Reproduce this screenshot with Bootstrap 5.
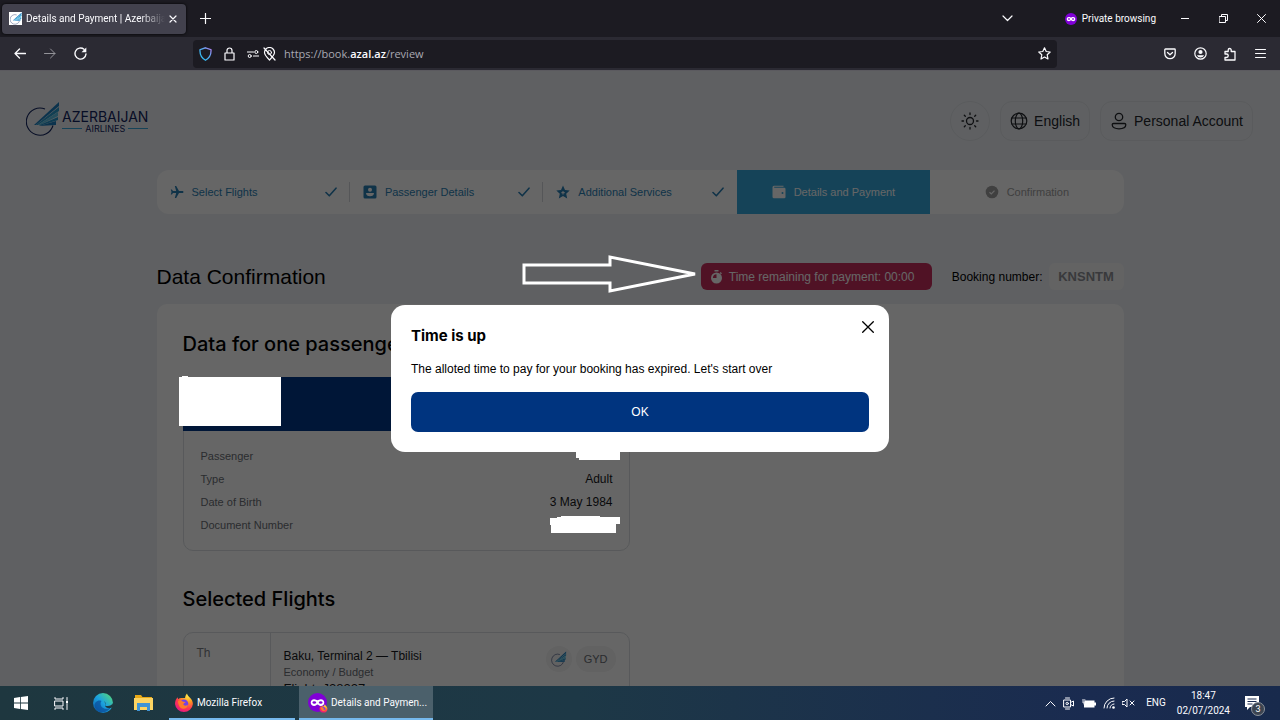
<!DOCTYPE html>
<html lang="en">
<head>
<meta charset="utf-8">
<meta name="viewport" content="width=device-width, initial-scale=1">
<title>Details and Payment | Azerbaijan Airlines</title>
<link href="https://cdn.jsdelivr.net/npm/bootstrap@5.3.0/dist/css/bootstrap.min.css" rel="stylesheet">
<style>
  body { font-family: "Liberation Sans", Arial, sans-serif; font-size: 12px; line-height: 16px; color: #000; background: #1c1b22; }
  svg { display: block; flex: none; }
  button { font: inherit; color: inherit; background: none; border: 0; padding: 0; }
  .sys { font-family: Roboto, "Open Sans", sans-serif; color: #fbfbfe; font-size: 10px; }
  .stroke { fill: none; stroke: currentColor; stroke-linecap: round; stroke-linejoin: round; }

  /* browser chrome */
  .tabstrip { height: 37px; background: #1c1b22; padding-left: 2px; }
  .tab { width: 184px; height: 30px; background: #42414d; border-radius: 4px; padding: 0 9px 0 7px; gap: 4px; box-shadow: 0 0 3px #000; }
  .tab-title { overflow: hidden; white-space: nowrap; -webkit-mask-image: linear-gradient(90deg, #000 82%, transparent); mask-image: linear-gradient(90deg, #000 82%, transparent); }
  .tool { width: 30px; height: 30px; display: flex; align-items: center; justify-content: center; }
  .win { width: 38px; height: 36px; display: flex; align-items: center; justify-content: center; }
  .private { gap: 5px; padding: 0 10px 0 42px; }
  .toolbar { height: 34px; background: #2b2a33; border-bottom: 1px solid #5b5a5f; padding: 0 5px; }
  .urlbar { height: 28px; background: #1c1b22; border-radius: 4px; margin: 0 98px; padding: 0 6px; }
  .url { font-family: "Open Sans", "Noto Sans", sans-serif; font-size: 11px; color: #a9a9b2; text-decoration: none; }
  .url b { color: #fbfbfe; font-weight: 600; }

  /* airline page */
  .site { background: #eef1f5; }
  .dim { position: absolute; inset: 0; background: rgba(0,0,0,.6); z-index: 10; }
  .topbar { padding: 30px 27px 0 26px; }
  .brand { color: #12245f; text-decoration: none; gap: 2px; padding-bottom: 4px; }
  .brand-name { font-family: Inter, sans-serif; font-size: 14px; line-height: 14px; padding-top: 5px; }
  .brand-sub { font-family: Inter, sans-serif; font-size: 9px; line-height: 10px; gap: 3px; }
  .brand-sub::before, .brand-sub::after { content: ""; flex: 1; height: 1px; background: #38a9dc; }
  .pills { gap: 10px; }
  .pill { height: 40px; border: 1px solid #e0e3e8; border-radius: 12px; padding: 0 9px; gap: 6px; font-size: 14px; color: #23262c; }
  .pill-round { width: 40px; border-radius: 50%; }
  .wrap { max-width: 967px; }
  .steps { height: 44px; margin-top: 29px; background: #fff; border-radius: 12px; font-size: 11px; color: #2a7fb5; }
  .step { flex: 1 1 0; padding: 0 13px; gap: 8px; color: inherit; text-decoration: none; }
  .step-line { height: 20px; border-left: 1px solid #d5d8dc; margin-left: -1px; }
  .step-now { background: #36a9dd; color: #fff; }
  .step-next { color: #a0a0a0; }
  .title-row { margin-top: 49px; height: 27px; }
  .big { font-size: 21px; line-height: 26px; font-weight: 400; margin: 0; white-space: nowrap; }
  .big-medium { font-family: Inter, sans-serif; font-size: 20px; font-weight: 500; }
  .timer { height: 27px; width: 231px; background: #c82d5c; color: #fff; border-radius: 6px; padding: 0 9px; gap: 6px; margin-right: 20px; }
  .code { height: 27px; width: 75px; background: #f8f8f8; border-radius: 6px; color: #8e9096; font-weight: 700; font-size: 13px; margin-left: 6px; }
  .panel { background: #fff; border-radius: 10px; margin-top: 14px; padding: 27px 26px 200px; }
  .box { max-width: 447px; border: 1px solid #dcdfe3; border-radius: 10px; margin-top: 20px; }
  .pax-head { height: 54px; background: #00388a; margin: -1px; border-radius: 10px 10px 0 0; }
  .pax { width: 100%; margin: 14px 0; }
  .pax th { font-weight: 400; font-size: 11px; color: #6b6f76; padding: 0 0 0 17px; height: 23px; }
  .pax td { padding: 0 16px 0 0; text-align: right; color: #16181c; position: relative; }
  .chosen { margin-top: 35px; }
  .cover { position: absolute; z-index: 20; fill: #fff; }
  .cover-name { left: -4px; top: -1px; }
  .cover-passenger { right: 9px; top: 2px; }
  .cover-document { right: 9px; top: 3px; }
  .pointer { position: absolute; z-index: 20; left: -180px; top: -9px; fill: none; stroke: #fff; stroke-width: 3; }
  .day { width: 87px; border-right: 1px solid #dcdfe3; padding: 12px 13px; color: #7a7d83; height: 130px; }
  .leg { padding: 15px 13px 0; color: #16181c; }
  .muted { font-size: 11px; line-height: 17px; color: #6b6f76; }
  .flight-no { font-size: 13px; line-height: 16px; }
  .chips { gap: 4px; padding: 13px 13px 0 0; }
  .chip { height: 26px; border-radius: 13px; background: #f4f4f4; color: #6b6f76; font-size: 11px; padding: 0 8px; }
  .layer { position: absolute; inset: 0; z-index: 30; }
  .dialog { width: 498px; background: #fff; border-radius: 14px; padding: 20px; }
  .dialog h2 { font-family: Inter, sans-serif; font-size: 15px; line-height: 22px; font-weight: 700; margin: 0; }
  .dialog p { margin: 14px 0; line-height: 17px; }
  .dialog-x { margin: -4px -5px 0 0; }
  .ok { height: 40px; background: #00347f; color: #fff; border-radius: 7px; }

  /* taskbar */
  .taskbar { height: 34px; background: linear-gradient(90deg, #1e373f, #1d3846 45%, #1a2b50 85%, #182a4c); }
  .task { height: 34px; gap: 3px; padding: 2px 0 0 5px; border-bottom: 2px solid #76b9ed; }
  .task-first { margin-left: 5px; }
  .task-now { background: #4b606b; padding-left: 9px; }
  .launch { width: 41px; height: 34px; display: flex; align-items: center; justify-content: center; }
  .clock { line-height: 15px; }
  .tray { gap: 7px; padding-right: 21px; }
  .count { position: absolute; left: 6px; top: 6px; width: 14px; height: 14px; border-radius: 50%; background: #3c4450; border: 1px solid #8b929b; font-size: 9px; line-height: 12px; text-align: center; }
</style>
</head>
<body>
<svg width="0" height="0" class="position-absolute" aria-hidden="true">
  <defs>
    <symbol id="wing" viewBox="0 0 34 36">
      <path d="M27 24.500A13.600 13.600 0 1 1 19 8" fill="none" stroke="#12245f" stroke-width="1.100"/>
      <path d="M8 24 33 1v4L10 24z" fill="#1d7fc0"/><path d="M10 24 33 6v4L12 24z" fill="#2b9dd0"/><path d="M12 24 32 11v4L14 24z" fill="#5cc0e4"/><path d="M13 24.300 32 16v3L15 24.500z" fill="#2596cc"/><path d="M13 25 30 20v4z" fill="#1d7fc0"/>
    </symbol>
    <symbol id="check" viewBox="0 0 12 10"><path class="stroke" d="M1 5.500 4.300 8.800 11 1.200" stroke-width="1.600"/></symbol>
    <symbol id="mask" viewBox="0 0 16 16"><circle cx="8" cy="8" r="8" fill="#8000d7"/><path d="M5.200 5.200c1.300 0 2 .8 2.800.8s1.500-.8 2.800-.8c1.800 0 2.900 1.200 2.900 2.700 0 1.800-1.200 3-2.900 3-1.500 0-2-1.200-2.800-1.200s-1.300 1.200-2.800 1.200c-1.700 0-2.900-1.200-2.900-3 0-1.500 1.100-2.700 2.900-2.700z" fill="#fff"/><ellipse cx="5.300" cy="8" rx="1.500" ry="1" fill="#8000d7"/><ellipse cx="10.700" cy="8" rx="1.500" ry="1" fill="#8000d7"/></symbol>
    <radialGradient id="fox" cx=".75" cy=".1" r="1"><stop offset="0" stop-color="#fff44f"/><stop offset=".35" stop-color="#ff9a1f"/><stop offset=".7" stop-color="#ff3750"/><stop offset="1" stop-color="#e31587"/></radialGradient>
    <linearGradient id="edge" x1="0" y1="1" x2="1" y2="0"><stop offset="0" stop-color="#0c59a4"/><stop offset=".5" stop-color="#1ba2e0"/><stop offset="1" stop-color="#5de06a"/></linearGradient>
    <linearGradient id="shield" x1="0" y1="1" x2="1" y2="0"><stop offset="0" stop-color="#21c5f5"/><stop offset=".6" stop-color="#5aa8f0"/><stop offset="1" stop-color="#b67cf0"/></linearGradient>
    <symbol id="firefox" viewBox="0 0 20 20"><path d="M13 .5c.4 1.800 1.600 2.800 3 4.300 1.700 1.800 2.900 3.600 2.900 6.200A9 9 0 0 1 1 11c0-2.600.8-5 2.600-6.800l.5 2c1-.9 2.200-1.300 3.400-1.200C8.500 4.800 10 5 11 5c.3-1.800.8-3.300 2-4.500z" fill="url(#fox)"/><circle cx="10" cy="10.800" r="4.300" fill="#7542e5"/><path d="M4 8c2-1 4-.5 5 .8 1.400-.2 2.300 0 2.600.6-1 .2-2 .8-2.300 1.900 1 2 3.400 1.600 4.700.2-.3 3-2.700 4.500-5 4.200C6 15.300 4 12 4 8z" fill="#ff7a2a"/></symbol>
  </defs>
</svg>

<div class="vh-100 d-flex flex-column overflow-hidden">

  <header class="sys">
    <div class="tabstrip d-flex align-items-center">
      <div class="tab d-flex align-items-center">
        <svg width="13" height="13" viewBox="0 0 13 13"><rect width="13" height="13" fill="#fff"/><svg x="1" y="0" width="12" height="13"><use href="#wing"/></svg></svg>
        <span class="tab-title flex-fill">Details and Payment | Azerbaijan Airlines</span>
        <button aria-label="Close tab"><svg width="8" height="8" viewBox="0 0 8 8"><path class="stroke" stroke-width="1.200" d="M1 1l6 6M7 1 1 7"/></svg></button>
      </div>
      <button class="tool ms-1" aria-label="New tab"><svg width="11" height="11" viewBox="0 0 11 11"><path class="stroke" stroke-width="1.200" d="M5.500.5v10M.5 5.500h10"/></svg></button>
      <button class="tool ms-auto" aria-label="List all tabs"><svg width="11" height="7" viewBox="0 0 11 7"><path class="stroke" stroke-width="1.200" d="M1 1l4.500 4.500L10 1"/></svg></button>
      <span class="private d-flex align-items-center"><svg width="12" height="12"><use href="#mask"/></svg><span class="text-nowrap">Private browsing</span></span>
      <button class="win" aria-label="Minimize"><svg width="8" height="8" viewBox="0 0 8 8"><path class="stroke" d="M0 3.500h8"/></svg></button>
      <button class="win" aria-label="Restore"><svg width="9" height="9" viewBox="0 0 9 9"><path class="stroke" d="M.5 2.500h6v6h-6zM2.500 2.500v-2h6v6h-2"/></svg></button>
      <button class="win" aria-label="Close"><svg width="9" height="9" viewBox="0 0 9 9"><path class="stroke" d="M.5.5l8 8M8.500.5l-8 8"/></svg></button>
    </div>
    <div class="toolbar d-flex align-items-center">
      <button class="tool" aria-label="Back"><svg width="12" height="11" viewBox="0 0 12 11"><path class="stroke" stroke-width="1.300" d="M11.500 5.500H1M5.500 1 1 5.500 5.500 10"/></svg></button>
      <button class="tool opacity-50" aria-label="Forward"><svg width="12" height="11" viewBox="0 0 12 11"><path class="stroke" d="M.5 5.500H11M6.500 1 11 5.500 6.500 10"/></svg></button>
      <button class="tool" aria-label="Reload"><svg width="13" height="13" viewBox="0 0 13 13"><path class="stroke" stroke-width="1.400" d="M12 7A5.500 5.500 0 1 1 10 2.300"/><path d="M12.300.5v4.800H7.500z" fill="currentColor"/></svg></button>
      <div class="urlbar flex-fill d-flex align-items-center gap-2">
        <svg width="13" height="14" viewBox="0 0 13 14"><path d="M6.500.8 12 2.700c.3 4.600-1 8-5.500 10.500C2 10.700.7 7.300 1 2.700z" fill="none" stroke="url(#shield)" stroke-width="1.300"/></svg>
        <svg class="mx-1" width="11" height="14" viewBox="0 0 11 14"><path class="stroke" stroke-width="1.200" d="M1 6h9v7H1zM3 6V3.500a2.500 2.500 0 0 1 5 0V6"/></svg>
        <span class="d-flex align-items-center gap-1">
        <svg width="12" height="8" viewBox="0 0 12 8"><path class="stroke" stroke-width="1.200" d="M.5 2h6M6.500 6h5"/><circle class="stroke" cx="9.300" cy="2" r="1.500"/><circle class="stroke" cx="2.700" cy="6" r="1.500"/></svg>
        <svg width="13" height="14" viewBox="0 0 13 14"><path class="stroke" stroke-width="1.200" d="M6.500 13C3 9.500 1.500 8 1.500 5.500a5 5 0 0 1 10 0C11.500 8 10 9.500 6.500 13zM1 1l11 12"/><circle class="stroke" cx="6.500" cy="5.500" r="2"/></svg></span>
        <a class="url flex-fill" href="#">https://book.<b>azal.az</b>/review</a>
        <button aria-label="Bookmark"><svg width="13" height="13" viewBox="0 0 13 13"><path class="stroke" stroke-width="1.200" d="M6.500.8 8.200 4.500l4 .5-3 2.800.8 4.200-3.500-2L3 12l.8-4.200L.8 5l4-.5z"/></svg></button>
      </div>
      <button class="tool" aria-label="Save to Pocket"><svg width="12" height="12" viewBox="0 0 12 12"><path class="stroke" stroke-width="1.300" d="M1.500 1h9q.7 0 .7.700V5.500a5.200 5.200 0 0 1-10.400 0V1.700Q.8 1 1.500 1zM3.500 4.500 6 6.800l2.500-2.300"/></svg></button>
      <button class="tool" aria-label="Account"><svg width="13" height="13" viewBox="0 0 13 13"><circle class="stroke" cx="6.500" cy="6.500" r="5.700" stroke-width="1.200"/><circle cx="6.500" cy="5" r="2.100" fill="currentColor"/><path d="M2.900 8.300h7.200Q9 10.500 6.500 10.500T2.900 8.300z" fill="currentColor"/></svg></button>
      <button class="tool" aria-label="Extensions"><svg width="12" height="14" viewBox="0 0 12 14"><path class="stroke" stroke-width="1.300" d="M1 7V4.500h3.200V3a1.500 1.500 0 0 1 3 0v1.500H11V13H1v-2.500h1.500a1.700 1.700 0 0 0 0-3.500z"/></svg></button>
      <button class="tool" aria-label="Menu"><svg width="11" height="9" viewBox="0 0 11 9"><path class="stroke" d="M.5 .5h10M.5 4.500h10M.5 8.500h10"/></svg></button>
    </div>
  </header>

  <main class="site flex-fill position-relative overflow-hidden">
    <div class="topbar d-flex align-items-center">
      <a class="brand d-flex align-items-center me-auto" href="#">
        <svg width="34" height="36"><use href="#wing"/></svg>
        <span class="d-flex flex-column"><span class="brand-name">AZERBAIJAN</span><span class="brand-sub d-flex align-items-center">AIRLINES</span></span>
      </a>
      <div class="pills d-flex">
        <button class="pill pill-round d-flex align-items-center justify-content-center p-0" aria-label="Theme"><svg width="18" height="18" viewBox="0 0 18 18"><circle class="stroke" cx="9" cy="9" r="3.500" stroke-width="1.300"/><path class="stroke" stroke-width="1.300" d="M9 1v1.500M9 15.500V17M1 9h1.500M15.500 9H17M3.300 3.300l1 1M13.700 13.700l1 1M14.700 3.300l-1 1M4.300 13.700l-1 1"/></svg></button>
        <button class="pill d-flex align-items-center"><svg width="18" height="18" viewBox="0 0 18 18"><g class="stroke" stroke-width="1.200"><circle cx="9" cy="9" r="7.800"/><ellipse cx="9" cy="9" rx="3.700" ry="7.800"/><path d="M2 6h14M2 12h14"/></g></svg>English</button>
        <button class="pill d-flex align-items-center"><svg width="18" height="18" viewBox="0 0 18 18"><g class="stroke" stroke-width="1.300"><circle cx="9" cy="5" r="3.700"/><path d="M3.500 11.500h11q1.300 0 1.300 1.300c0 2.600-3 4-6.800 4s-6.800-1.400-6.800-4q0-1.300 1.300-1.300z"/></g></svg>Personal Account</button>
      </div>
    </div>

    <div class="wrap mx-auto">
      <nav class="steps d-flex align-items-center overflow-hidden" aria-label="Booking steps">
        <a class="step d-flex align-items-center" href="#"><svg width="14" height="14" viewBox="0 0 14 14"><path fill="currentColor" d="M13.500 7c0 .6-.6 1-1.300 1H9L6.200 13H4.800L6.200 8H3L1.900 9.500H.8L1.500 7 .8 4.500h1.100L3 6h3.200L4.800 1h1.400L9 6h3.200c.7 0 1.300.4 1.300 1z"/></svg><span class="me-auto">Select Flights</span><svg width="12" height="10"><use href="#check"/></svg></a>
        <span class="step-line"></span>
        <a class="step d-flex align-items-center" href="#"><svg width="14" height="14" viewBox="0 0 14 14"><rect x=".5" y=".5" width="13" height="13" rx="1.500" fill="currentColor"/><circle cx="7" cy="4.800" r="2" fill="#fff"/><path d="M3 8h8q-.3 3.200-4 3.200T3 8z" fill="#fff"/></svg><span class="me-auto">Passenger Details</span><svg width="12" height="10"><use href="#check"/></svg></a>
        <span class="step-line"></span>
        <a class="step d-flex align-items-center" href="#"><svg width="14" height="14" viewBox="0 0 14 14"><path fill="currentColor" d="M7 .5 9 5l4.700.5-3.500 3.200 1 4.800L7 11l-4.200 2.500 1-4.800L.3 5.500 5 5z"/><path fill="none" stroke="#fff" d="M7 6v3.500M5.300 7.700h3.500"/></svg><span class="me-auto">Additional Services</span><svg width="12" height="10"><use href="#check"/></svg></a>
        <a class="step step-now h-100 d-flex align-items-center justify-content-center" href="#" aria-current="step"><svg width="14" height="14" viewBox="0 0 14 14"><path fill="currentColor" d="M2 .8h9.500v1H2.200v.9h10q1.300 0 1.300 1.300v8q0 1.300-1.300 1.300H2q-1.500 0-1.500-1.500V2.300Q.5.8 2 .8z"/><circle cx="10.500" cy="8" r="1" fill="#36a9dd"/></svg>Details and Payment</a>
        <a class="step step-next d-flex align-items-center justify-content-center" href="#"><svg width="14" height="14" viewBox="0 0 14 14"><circle cx="7" cy="7" r="6.300" fill="currentColor"/><path fill="none" stroke="#fff" stroke-width="1.300" d="M4.500 7.200l1.800 1.700 3.200-3.300"/></svg>Confirmation</a>
      </nav>

      <div class="title-row d-flex align-items-center">
        <h1 class="big me-auto">Data Confirmation</h1>
        <div class="timer d-flex align-items-center position-relative text-nowrap">
          <svg class="pointer" width="180" height="40" viewBox="0 0 180 40" aria-hidden="true"><path d="M3 11h86V3l85 17-85 17v-8H3z"/></svg>
          <svg width="13" height="14" viewBox="0 0 13 14"><circle cx="6.500" cy="8" r="5.500" fill="currentColor"/><path fill="currentColor" d="M4.500 0h4v1.500h-4zM10.500 2l1.500 1.300-1 1L9.700 3z"/><path d="M6.500 8V4.300A3.800 3.800 0 0 0 2.900 8z" fill="#c82d5c"/></svg>Time remaining for payment: 00:00
        </div>
        <span class="text-nowrap">Booking number:</span>
        <span class="code d-flex align-items-center justify-content-center">KNSNTM</span>
      </div>

      <section class="panel">
        <h2 class="big big-medium">Data for one passenger</h2>
        <div class="box">
          <div class="pax-head position-relative"><svg class="cover cover-name" width="102" height="50" viewBox="0 0 102 50" aria-hidden="true"><path d="M0 1h3V0h6v1h93v49H0z"/></svg></div>
          <table class="pax">
            <tr><th scope="row">Passenger</th><td><svg class="cover cover-passenger" width="44" height="14" viewBox="0 0 44 14" aria-hidden="true"><path d="M0 0h40v6h4v8H3v-2H0z"/></svg></td></tr>
            <tr><th scope="row">Type</th><td>Adult</td></tr>
            <tr><th scope="row">Date of Birth</th><td>3 May 1984</td></tr>
            <tr><th scope="row">Document Number</th><td><svg class="cover cover-document" width="70" height="17" viewBox="0 0 70 17" aria-hidden="true"><path d="M0 2h7V1h4V0h39v1h20v7h-4v9H1V9H0z"/></svg></td></tr>
          </table>
        </div>
        <h2 class="big big-medium chosen">Selected Flights</h2>
        <div class="box d-flex">
          <div class="day">Th</div>
          <div class="leg flex-fill">
            <div>Baku, Terminal 2 — Tbilisi</div>
            <div class="muted">Economy / Budget</div>
            <div class="flight-no">Flight: J28227</div>
          </div>
          <div class="chips d-flex align-items-start">
            <span class="chip d-flex align-items-center px-1"><svg width="18" height="16"><use href="#wing"/></svg></span>
            <span class="chip d-flex align-items-center">GYD</span>
          </div>
        </div>
      </section>
    </div>

    <div class="dim"></div>

    <div class="layer d-flex align-items-center justify-content-center">
      <div class="dialog" role="dialog" aria-labelledby="dlg-title">
        <div class="d-flex justify-content-between align-items-start">
          <h2 id="dlg-title">Time is up</h2>
          <button class="dialog-x" aria-label="Close"><svg width="12" height="12" viewBox="0 0 12 12"><path class="stroke" stroke-width="1.300" d="M.7.700l10.600 10.600M11.300.7.700 11.300"/></svg></button>
        </div>
        <p>The alloted time to pay for your booking has expired. Let's start over</p>
        <button class="ok w-100">OK</button>
      </div>
    </div>
  </main>

  <footer class="taskbar sys d-flex align-items-center">
    <button class="launch" aria-label="Start"><svg width="14" height="14" viewBox="0 0 14 14"><path fill="#fff" d="M0 2l6-.9v5.500H0zM6.800 1 14 0v6.600H6.800zM0 7.400h6v5.500L0 12zM6.800 7.400H14V14l-7.200-1z"/></svg></button>
    <button class="launch" aria-label="Task view"><svg width="15" height="13" viewBox="0 0 15 13"><path class="stroke" d="M1 .5v1.500h8V.5M1 12.500V11h8v1.500M1 4h8v5H1zM13 .5v3M13 6.500v6"/><path d="M12 4h2v2h-2z" fill="#fff"/></svg></button>
    <button class="launch" aria-label="Edge"><svg width="20" height="20" viewBox="0 0 20 20"><circle cx="10" cy="10" r="10" fill="url(#edge)"/><path d="M8.500 8c-2.500 3 0 9 6.500 7.500 1.500-.3 2.500-1 3.200-1.500C14 21.500 3 21 1.500 13 1.500 9 5 6.500 8.500 8z" fill="#0b4f9c" opacity=".75"/><path d="M12 12.500c3 1.500 7 0 7.800-2.500L20 14l-2 1c-3 .5-6-.5-6-2.500 1-1.500.7-3.500-1-4.500 1 1 1.500 3 1 4.500z" fill="#1e373f"/></svg></button>
    <button class="launch" aria-label="File Explorer"><svg width="19" height="17" viewBox="0 0 19 17"><path d="M1 0h6l1.500 2H18v12H1z" fill="#e8a916"/><path d="M0 3h19v12H0z" fill="#fcd462"/><path d="M3 8h13v8h-3v-4H6v4H3z" fill="#3f94d6"/></svg></button>
    <button class="task task-first d-flex align-items-center text-nowrap" style="width:126px"><svg width="20" height="20"><use href="#firefox"/></svg>Mozilla Firefox</button>
    <button class="task task-now d-flex align-items-center text-nowrap ms-1" style="width:134px"><svg width="20" height="20" viewBox="0 0 20 20"><svg width="19" height="19"><use href="#mask"/></svg><svg x="11" y="11" width="9" height="9"><use href="#firefox"/></svg></svg>Details and Paymen...</button>
    <div class="tray d-flex align-items-center ms-auto text-nowrap">
      <svg width="11" height="7" viewBox="0 0 11 7"><path class="stroke" d="M1 6l4.500-4.500L10 6"/></svg>
      <svg width="12" height="13" viewBox="0 0 12 13"><path class="stroke" d="M1 3h6.500v7H1zM7.500 5.500l3-1.500v5l-3-1.500M2.500 1h4M2.500 12h4"/><circle class="stroke" cx="4.200" cy="6.500" r="1.200"/></svg>
      <svg width="14" height="9" viewBox="0 0 14 9"><path fill="#fff" d="M3 1.500h9.500V3.500H14v3h-1.500V8.500H2V5z"/><path class="stroke" d="M.5 1h2.500M.5 3h2.500M2 3v2"/></svg>
      <svg width="12" height="12" viewBox="0 0 12 12"><g class="stroke"><path d="M1 11A10 10 0 0 1 11 1M4 11a7 7 0 0 1 7-7M7 11a4 4 0 0 1 4-4"/></g><circle cx="10.500" cy="10.500" r="1.300" fill="#fff"/></svg>
      <svg width="13" height="10" viewBox="0 0 13 10"><path class="stroke" d="M.5 3.500h2L5 1v8L2.500 6.500h-2zM8 3l4 4M12 3 8 7"/></svg>
      <span class="ms-1">ENG</span>
      <div class="clock text-center ms-1">18:47<br>02/07/2024</div>
      <div class="position-relative ms-2"><svg width="14" height="14" viewBox="0 0 14 14"><path fill="#fff" d="M0 0h14v11H5l-3 3v-3H0z"/><path d="M2.500 3h9M2.500 5.500h9M2.500 8h5" stroke="#1a2b50"/></svg><span class="count">3</span></div>
    </div>
  </footer>
</div>
<script src="https://cdn.jsdelivr.net/npm/bootstrap@5.3.0/dist/js/bootstrap.bundle.min.js"></script>
</body>
</html>
